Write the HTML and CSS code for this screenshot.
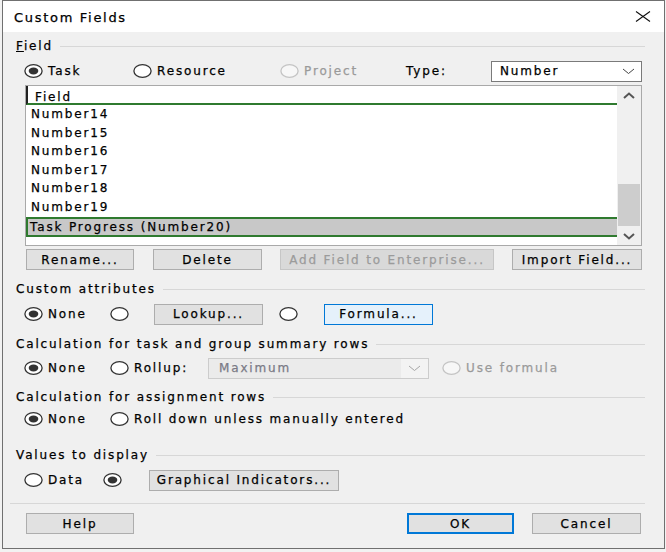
FILE: index.html
```html
<!DOCTYPE html>
<html>
<head>
<meta charset="utf-8">
<link rel="stylesheet" href="styles.css">
</head>
<body>
<div class="dialog">
  <div class="titlebar">
    <span class="title">Custom Fields</span>
    <svg class="close" width="16" height="11" viewBox="0 0 16 11"><path d="M1 0.5 L15 10.5 M15 0.5 L1 10.5" stroke="#111" stroke-width="1.1" fill="none"/></svg>
  </div>
  <div class="content">
    <div class="group-label g-field"><span><u>F</u>ield</span></div>

    <div class="row type-row">
      <div class="opt w-task"><svg class="radio" width="19" height="14" viewBox="0 0 19 14"><ellipse cx="9.5" cy="7" rx="8.6" ry="6.3" fill="#fff" stroke="#333" stroke-width="1.3"/><ellipse cx="9.5" cy="7" rx="4.8" ry="3.4" fill="#333"/></svg><span>Task</span></div>
      <div class="opt w-res"><svg class="radio" width="19" height="14" viewBox="0 0 19 14"><ellipse cx="9.5" cy="7" rx="8.6" ry="6.3" fill="#fff" stroke="#333" stroke-width="1.3"/></svg><span>Resource</span></div>
      <div class="opt w-proj disabled"><svg class="radio" width="19" height="14" viewBox="0 0 19 14"><ellipse cx="9.5" cy="7" rx="8.6" ry="6.3" fill="#f7f7f7" stroke="#c4c4c4" stroke-width="1.3"/></svg><span>Project</span></div>
      <div class="type-label">Type:</div>
      <div class="combo type-combo"><span>Number</span><svg width="13" height="7" viewBox="0 0 13 7"><path d="M1 1 L6.5 5.5 L12 1" stroke="#444" stroke-width="1" fill="none"/></svg></div>
    </div>

    <div class="list">
      <div class="list-main">
        <div class="list-header">Field</div>
        <div class="list-item">Number14</div>
        <div class="list-item">Number15</div>
        <div class="list-item">Number16</div>
        <div class="list-item">Number17</div>
        <div class="list-item">Number18</div>
        <div class="list-item">Number19</div>
        <div class="list-item selected">Task Progress (Number20)</div>
      </div>
      <div class="scrollbar">
        <div class="sb-btn"><svg width="12" height="7" viewBox="0 0 12 7"><path d="M1 6 L6 1.5 L11 6" stroke="#555" stroke-width="2" fill="none"/></svg></div>
        <div class="sb-track"><div class="sb-thumb"></div></div>
        <div class="sb-btn"><svg width="12" height="7" viewBox="0 0 12 7"><path d="M1 1 L6 5.5 L11 1" stroke="#555" stroke-width="2" fill="none"/></svg></div>
      </div>
    </div>

    <div class="row btn-row">
      <div class="btn w-rename">Rename...</div>
      <div class="btn w-delete">Delete</div>
      <div class="btn btn-disabled w-add">Add Field to Enterprise...</div>
      <div class="btn w-import">Import Field...</div>
    </div>

    <div class="group-label g-attr"><span>Custom attributes</span></div>
    <div class="row sub-row">
      <div class="opt w-none"><svg class="radio" width="19" height="14" viewBox="0 0 19 14"><ellipse cx="9.5" cy="7" rx="8.6" ry="6.3" fill="#fff" stroke="#333" stroke-width="1.3"/><ellipse cx="9.5" cy="7" rx="4.8" ry="3.4" fill="#333"/></svg><span>None</span></div>
      <svg class="radio" width="19" height="14" viewBox="0 0 19 14"><ellipse cx="9.5" cy="7" rx="8.6" ry="6.3" fill="#fff" stroke="#333" stroke-width="1.3"/></svg>
      <div class="btn w-lookup">Lookup...</div>
      <svg class="radio r-formula" width="19" height="14" viewBox="0 0 19 14"><ellipse cx="9.5" cy="7" rx="8.6" ry="6.3" fill="#fff" stroke="#333" stroke-width="1.3"/></svg>
      <div class="btn btn-focus w-formula">Formula...</div>
    </div>

    <div class="group-label g-task"><span>Calculation for task and group summary rows</span></div>
    <div class="row sub-row roll-row">
      <div class="opt w-none"><svg class="radio" width="19" height="14" viewBox="0 0 19 14"><ellipse cx="9.5" cy="7" rx="8.6" ry="6.3" fill="#fff" stroke="#333" stroke-width="1.3"/><ellipse cx="9.5" cy="7" rx="4.8" ry="3.4" fill="#333"/></svg><span>None</span></div>
      <div class="opt w-rollup"><svg class="radio" width="19" height="14" viewBox="0 0 19 14"><ellipse cx="9.5" cy="7" rx="8.6" ry="6.3" fill="#fff" stroke="#333" stroke-width="1.3"/></svg><span>Rollup:</span></div>
      <div class="combo combo-disabled"><span class="combo-text">Maximum</span><span class="combo-drop"><svg width="13" height="7" viewBox="0 0 13 7"><path d="M1 1 L6.5 5.5 L12 1" stroke="#a6a6a6" stroke-width="1" fill="none"/></svg></span></div>
      <div class="opt disabled w-useformula"><svg class="radio" width="19" height="14" viewBox="0 0 19 14"><ellipse cx="9.5" cy="7" rx="8.6" ry="6.3" fill="#f7f7f7" stroke="#c4c4c4" stroke-width="1.3"/></svg><span>Use formula</span></div>
    </div>

    <div class="group-label g-assign"><span>Calculation for assignment rows</span></div>
    <div class="row sub-row assign-row">
      <div class="opt w-none"><svg class="radio" width="19" height="14" viewBox="0 0 19 14"><ellipse cx="9.5" cy="7" rx="8.6" ry="6.3" fill="#fff" stroke="#333" stroke-width="1.3"/><ellipse cx="9.5" cy="7" rx="4.8" ry="3.4" fill="#333"/></svg><span>None</span></div>
      <div class="opt"><svg class="radio" width="19" height="14" viewBox="0 0 19 14"><ellipse cx="9.5" cy="7" rx="8.6" ry="6.3" fill="#fff" stroke="#333" stroke-width="1.3"/></svg><span>Roll down unless manually entered</span></div>
    </div>

    <div class="group-label g-values"><span>Values to display</span></div>
    <div class="row sub-row values-row">
      <div class="opt w-data"><svg class="radio" width="19" height="14" viewBox="0 0 19 14"><ellipse cx="9.5" cy="7" rx="8.6" ry="6.3" fill="#fff" stroke="#333" stroke-width="1.3"/></svg><span>Data</span></div>
      <svg class="radio" width="19" height="14" viewBox="0 0 19 14"><ellipse cx="9.5" cy="7" rx="8.6" ry="6.3" fill="#fff" stroke="#333" stroke-width="1.3"/><ellipse cx="9.5" cy="7" rx="4.8" ry="3.4" fill="#333"/></svg>
      <div class="btn w-graph">Graphical Indicators...</div>
    </div>

    <div class="separator"></div>

    <div class="row footer">
      <div class="btn w-help">Help</div>
      <div class="footer-right">
        <div class="btn btn-default w-ok">OK</div>
        <div class="btn w-cancel">Cancel</div>
      </div>
    </div>
  </div>
</div>
</body>
</html>
```

FILE: styles.css
```css
html, body {
  margin: 0;
  padding: 0;
}
body {
  background: #f2f2f2;
  font-family: "DejaVu Sans", "Noto Sans", sans-serif;
  font-size: 12px;
  letter-spacing: 1.85px;
  color: #000;
  -webkit-text-stroke-width: 0.25px;
}
.dialog {
  box-sizing: border-box;
  width: 663px;
  height: 549px;
  margin-left: 2px;
  border: 1px solid #707070;
  background: #f0f0f0;
}
.titlebar {
  height: 31px;
  background: #fff;
  display: flex;
  align-items: center;
  justify-content: space-between;
  padding: 0 13px 0 11px;
}
.title {
  font-size: 13px;
  letter-spacing: 1.7px;
  padding-top: 1px;
}
.close {
  display: block;
}
.content {
  padding: 0 19px 0 13px;
}
.group-label {
  height: 16px;
  display: flex;
  align-items: center;
  white-space: nowrap;
}
.group-label::after {
  content: "";
  flex: 1;
  height: 1px;
  background: #d7d7d7;
  margin-left: 7px;
}
.g-field { margin-top: 6px; }
.g-attr { margin-top: 11px; }
.g-task { margin-top: 11px; }
.g-assign { margin-top: 10px; }
.g-values { margin-top: 17px; }

.row {
  display: flex;
  align-items: center;
  white-space: nowrap;
}
.opt {
  display: flex;
  align-items: center;
  gap: 5px;
}
.radio {
  display: block;
  flex: none;
}
.disabled { color: #9a9a9a; }

.type-row {
  height: 22px;
  margin-top: 6px;
  padding-left: 8px;
}
.w-task { width: 109px; }
.w-res { width: 147px; }
.w-proj { width: 126px; }
.type-label { width: 85px; }
.combo {
  box-sizing: border-box;
  height: 21px;
  display: flex;
  align-items: center;
  justify-content: space-between;
}
.type-combo {
  width: 151px;
  border: 1px solid #7a7a7a;
  background: #fff;
  padding: 0 6px 0 8px;
}

.list {
  box-sizing: border-box;
  height: 161px;
  margin: 3px 3px 0 9px;
  border: 1px solid #a9a9a9;
  background: #fff;
  display: flex;
}
.list-main {
  flex: 1;
}
.list-header {
  box-sizing: border-box;
  height: 19px;
  border-left: 2px solid #222;
  border-bottom: 2px solid #2f7a2f;
  padding: 5px 0 0 7px;
  line-height: 12px;
}
.list-item {
  height: 18.6px;
  line-height: 18.6px;
  padding-left: 5px;
}
.list-item.selected {
  box-sizing: border-box;
  height: 20px;
  line-height: 16px;
  background: #c8c8c8;
  border-top: 2px solid #2f7a2f;
  border-bottom: 2px solid #2f7a2f;
  border-left: 2px solid #2f7a2f;
  padding-left: 2px;
}
.scrollbar {
  width: 24px;
  background: #f0f0f0;
  display: flex;
  flex-direction: column;
}
.sb-btn {
  height: 18px;
  display: flex;
  align-items: center;
  justify-content: center;
}
.sb-track {
  flex: 1;
  display: flex;
  flex-direction: column;
  justify-content: flex-end;
  padding: 0 1px 1px 1px;
}
.sb-thumb {
  height: 42px;
  background: #cdcdcd;
}

.btn {
  box-sizing: border-box;
  height: 21px;
  background: #e1e1e1;
  border: 1px solid #adadad;
  display: flex;
  align-items: center;
  justify-content: center;
}
.btn-disabled {
  background: #d9d9d9;
  border-color: #c6c6c6;
  color: #9b9b9b;
}
.btn-focus {
  background: #e5f1fb;
  border-color: #0078d7;
}
.btn-default {
  border: 2px solid #0078d7;
}
.btn-row {
  height: 21px;
  margin-top: 3px;
  padding-left: 10px;
  gap: 18px;
}
.w-rename { width: 108px; }
.w-delete { width: 109px; margin-left: 1px; }
.w-add { width: 214px; }
.w-import { width: 130px; }

.sub-row {
  height: 22px;
  margin-top: 6px;
  padding-left: 8px;
}
.w-none { width: 86px; }
.w-lookup { width: 109px; margin-left: 25px; }
.r-formula { margin-left: 16px; }
.w-formula { width: 109px; margin-left: 26px; }

.roll-row { margin-top: 5px; }
.w-rollup { width: 98px; }
.combo-disabled {
  width: 221px;
  border: 1px solid #cccccc;
  background: #ebebeb;
  color: #7a7a86;
}
.combo-text {
  padding-left: 10px;
}
.combo-drop {
  align-self: stretch;
  width: 27px;
  background: #f3f3f3;
  display: flex;
  align-items: center;
  justify-content: center;
}
.w-useformula { margin-left: 13px; }

.assign-row { margin-top: 3px; }

.values-row { margin-top: 6px; }
.w-data { width: 79px; }
.w-graph { width: 190px; margin-left: 27px; }

.separator {
  height: 1px;
  background: #d7d7d7;
  margin: 12px 0 0 -6px;
}
.footer {
  height: 21px;
  margin-top: 9px;
  padding: 0 4px 0 10px;
  justify-content: space-between;
}
.footer-right {
  display: flex;
  gap: 18px;
}
.w-help { width: 108px; }
.w-ok { width: 107px; }
.w-cancel { width: 109px; }
```
